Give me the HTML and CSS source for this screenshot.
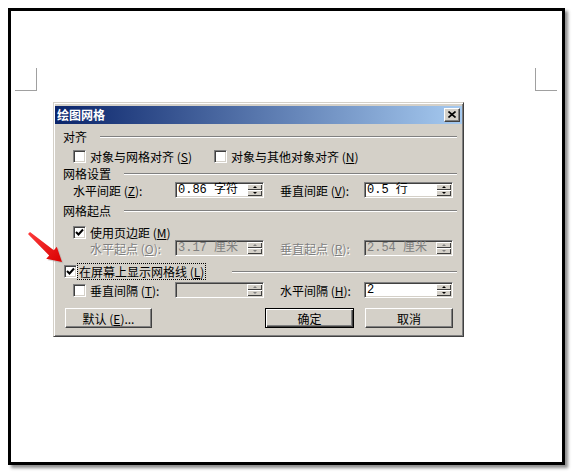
FILE: index.html
```html
<!DOCTYPE html>
<html lang="zh">
<head>
<meta charset="utf-8">
<title>绘图网格</title>
<link rel="stylesheet" href="styles.css">
</head>
<body>
<div class="frame">
  <i class="mark mark-l"></i>
  <i class="mark mark-r"></i>
  <svg class="arrow" viewBox="11 11 80 280" width="80" height="280">
    <defs>
      <linearGradient id="ag" x1="0" y1="0" x2="1" y2="1">
        <stop offset="0" stop-color="#ff3b3b"/>
        <stop offset="1" stop-color="#d80000"/>
      </linearGradient>
    </defs>
    <polygon points="30,231.9 53.8,250.2 56.8,246.8 62,262 46.2,258.8 49.2,255.4 28,234.1" fill="#999" opacity="0.35" transform="translate(1.5,1.5)"/>
    <polygon points="30,231.9 53.8,250.2 56.8,246.8 62,262 46.2,258.8 49.2,255.4 28,234.1" fill="url(#ag)"/>
  </svg>

  <div class="dialog">
    <div class="titlebar">
      <span class="title">绘图网格</span>
      <span class="close"><svg width="8" height="7" viewBox="0 0 8 7"><path d="M0.5 0.5 L7.5 6.5 M7.5 0.5 L0.5 6.5" stroke="#000" stroke-width="1.6"/></svg></span>
    </div>
    <div class="content">
      <div class="sec s1"><span>对齐</span><i class="rule"></i></div>
      <div class="row r2 ind">
        <label class="cbitem w141"><i class="cb"></i><span>对象与网格对齐 (<u>S</u>)</span></label>
        <label class="cbitem"><i class="cb"></i><span>对象与其他对象对齐 (<u>N</u>)</span></label>
      </div>
      <div class="sec s3"><span>网格设置</span><i class="rule"></i></div>
      <div class="row r4 ind">
        <span class="lbl w102">水平间距 (<u>Z</u>):</span>
        <span class="field"><span class="val">0.86 字符</span><span class="spin"><i class="up"></i><i class="dn"></i></span></span>
        <span class="lbl lbl2">垂直间距 (<u>V</u>):</span>
        <span class="field"><span class="val">0.5 行</span><span class="spin"><i class="up"></i><i class="dn"></i></span></span>
      </div>
      <div class="sec s5"><span>网格起点</span><i class="rule"></i></div>
      <div class="row r6 ind">
        <label class="cbitem"><i class="cb on"><svg width="9" height="9" viewBox="0 0 9 9"><path d="M1 4 L3.5 6.5 L8 1.5" fill="none" stroke="#000" stroke-width="2"/></svg></i><span>使用页边距 (<u>M</u>)</span></label>
      </div>
      <div class="row r7 ind2 dis">
        <span class="lbl w85">水平起点 (<u>O</u>):</span>
        <span class="field off"><span class="val">3.17 厘米</span><span class="spin"><i class="up"></i><i class="dn"></i></span></span>
        <span class="lbl lbl2">垂直起点 (<u>R</u>):</span>
        <span class="field off"><span class="val">2.54 厘米</span><span class="spin"><i class="up"></i><i class="dn"></i></span></span>
      </div>
      <div class="sec r8">
        <label class="cbitem"><i class="cb on"><svg width="9" height="9" viewBox="0 0 9 9"><path d="M1 4 L3.5 6.5 L8 1.5" fill="none" stroke="#000" stroke-width="2"/></svg></i><span class="focus">在屏幕上显示网格线 (<u>L</u>)</span></label>
        <i class="rule rule8"></i>
      </div>
      <div class="row r9 ind">
        <label class="cbitem w102"><i class="cb"></i><span>垂直间隔 (<u>T</u>):</span></label>
        <span class="field off"><span class="val"></span><span class="spin"><i class="up"></i><i class="dn"></i></span></span>
        <span class="lbl lbl2">水平间隔 (<u>H</u>):</span>
        <span class="field"><span class="val">2</span><span class="spin"><i class="up"></i><i class="dn"></i></span></span>
      </div>
      <div class="row btns">
        <span class="btn b1">默认 (<u>E</u>)...</span>
        <span class="btn b2 def">确定</span>
        <span class="btn b3">取消</span>
      </div>
    </div>
  </div>
</div>
</body>
</html>
```

FILE: styles.css
```css
html, body {
  margin: 0;
  padding: 0;
  background: #fff;
}
body {
  padding: 8px;
  font-family: "Noto Sans CJK SC", "DejaVu Sans", sans-serif;
  font-size: 12px;
  color: #000;
}
.frame {
  position: relative;
  box-sizing: border-box;
  width: 557px;
  height: 457px;
  border: 3px solid #000;
  background: #fff;
  box-shadow: 3px 3px 3px rgba(0, 0, 0, 0.45);
  padding: 91px 0 0 42px;
}
.mark {
  position: absolute;
  top: 57px;
  width: 21px;
  height: 22px;
  border-bottom: 1px solid #a0a0a0;
}
.mark-l {
  left: 4px;
  border-right: 1px solid #a0a0a0;
}
.mark-r {
  left: 524px;
  border-left: 1px solid #a0a0a0;
}
.arrow {
  position: absolute;
  left: 0;
  top: 0;
  z-index: 2;
}
.dialog {
  box-sizing: border-box;
  width: 411px;
  height: 235px;
  background: #d4d0c8;
  border: 1px solid;
  border-color: #d4d0c8 #404040 #404040 #d4d0c8;
  box-shadow: inset 1px 1px #fff, inset -1px -1px #808080;
  padding: 3px 1px 0 1px;
}
.titlebar {
  height: 18px;
  display: flex;
  align-items: center;
  justify-content: space-between;
  background: linear-gradient(to right, #0a246a, #a6caf0);
  padding: 0 2px;
}
.title {
  color: #fff;
  font-weight: bold;
  font-size: 12px;
  line-height: 18px;
}
.close {
  box-sizing: border-box;
  width: 16px;
  height: 14px;
  background: #d4d0c8;
  border: 1px solid;
  border-color: #fff #404040 #404040 #fff;
  box-shadow: inset -1px -1px #808080;
  display: flex;
  align-items: center;
  justify-content: center;
  padding-bottom: 1px;
}
.content {
  padding-left: 8px;
  padding-right: 5px;
}
.sec, .row {
  display: flex;
  align-items: center;
  white-space: nowrap;
}
.sec > span { line-height: 16px; }
.rule {
  flex: 1;
  height: 0;
  border-top: 1px solid #808080;
  border-bottom: 1px solid #fff;
  margin-left: 13px;
}
.s1 { margin-top: 4px; height: 18px; }
.r2 { height: 20px; }
.s3 { height: 16px; }
.r4 { height: 16px; }
.s5 { margin-top: 5px; height: 16px; }
.r6 { margin-top: 6px; height: 15px; }
.r7 { height: 16px; }
.r8 { margin-top: 7px; height: 17px; padding-left: 1px; }
.r9 { margin-top: 2px; height: 16px; }
.btns { margin-top: 10px; height: 20px; padding-left: 2px; }
.ind { padding-left: 10px; }
.ind2 { padding-left: 27px; }
.w141 { width: 141px; }
.w102 { width: 102px; flex: none; }
.w85 { width: 85px; flex: none; }
.lbl2 { margin-left: 16px; width: 84px; flex: none; }
.cbitem {
  display: flex;
  align-items: center;
}
.cbitem > span { margin-left: 4px; }
.r8 .cbitem > span { margin-left: 1px; }
.cb {
  box-sizing: border-box;
  width: 13px;
  height: 13px;
  background: #fff;
  border: 1px solid;
  border-color: #808080 #fff #fff #808080;
  box-shadow: inset 1px 1px #404040, inset -1px -1px #d4d0c8;
  display: flex;
  align-items: center;
  justify-content: center;
  flex: none;
}
.focus {
  outline: 1px dotted #000;
  outline-offset: 0;
  padding: 0 1px;
  line-height: 15px;
}
.rule8 { margin-left: 27px; }
u { text-decoration: underline; text-underline-offset: 1px; }
.field {
  box-sizing: border-box;
  width: 89px;
  height: 16px;
  background: #fff;
  border: 1px solid;
  border-color: #808080 #fff #fff #808080;
  box-shadow: inset 1px 1px #404040, inset -1px -1px #d4d0c8;
  display: flex;
  align-items: center;
  padding: 1px;
  flex: none;
}
.field.off { background: #d4d0c8; color: #808080; }
.val {
  flex: 1;
  padding-left: 1px;
  line-height: 12px;
  font-family: "Liberation Mono", "Noto Sans CJK SC", monospace;
  font-size: 12px;
}
.spin {
  width: 15px;
  height: 12px;
  display: flex;
  flex-direction: column;
}
.spin i {
  flex: 1;
  background: #d4d0c8;
  box-shadow: inset 1px 1px #fff, inset -1px -1px #404040;
  display: flex;
  align-items: center;
  justify-content: center;
}
.spin i::after {
  content: "";
  width: 0;
  height: 0;
  border-left: 2px solid transparent;
  border-right: 2px solid transparent;
}
.spin .up::after { border-bottom: 2px solid #000; }
.spin .dn::after { border-top: 2px solid #000; }
.off .spin i::after { border-bottom-color: #808080; border-top-color: #808080; }
.off .spin .up::after { border-top-color: transparent; }
.off .spin .dn::after { border-bottom-color: transparent; }
.dis .lbl { color: #808080; text-shadow: 1px 1px #fff; }
.btn {
  box-sizing: border-box;
  height: 20px;
  display: flex;
  align-items: center;
  justify-content: center;
  background: #d4d0c8;
  border: 1px solid;
  border-color: #fff #404040 #404040 #fff;
  box-shadow: inset -1px -1px #808080;
  flex: none;
}
.b1 { width: 87px; }
.b2 { width: 89px; margin-left: 113px; }
.b3 { width: 88px; margin-left: 11px; }
.btn.def {
  border: 1px solid #000;
  box-shadow: inset 1px 1px #fff, inset -1px -1px #404040, inset -2px -2px #808080;
}
```
